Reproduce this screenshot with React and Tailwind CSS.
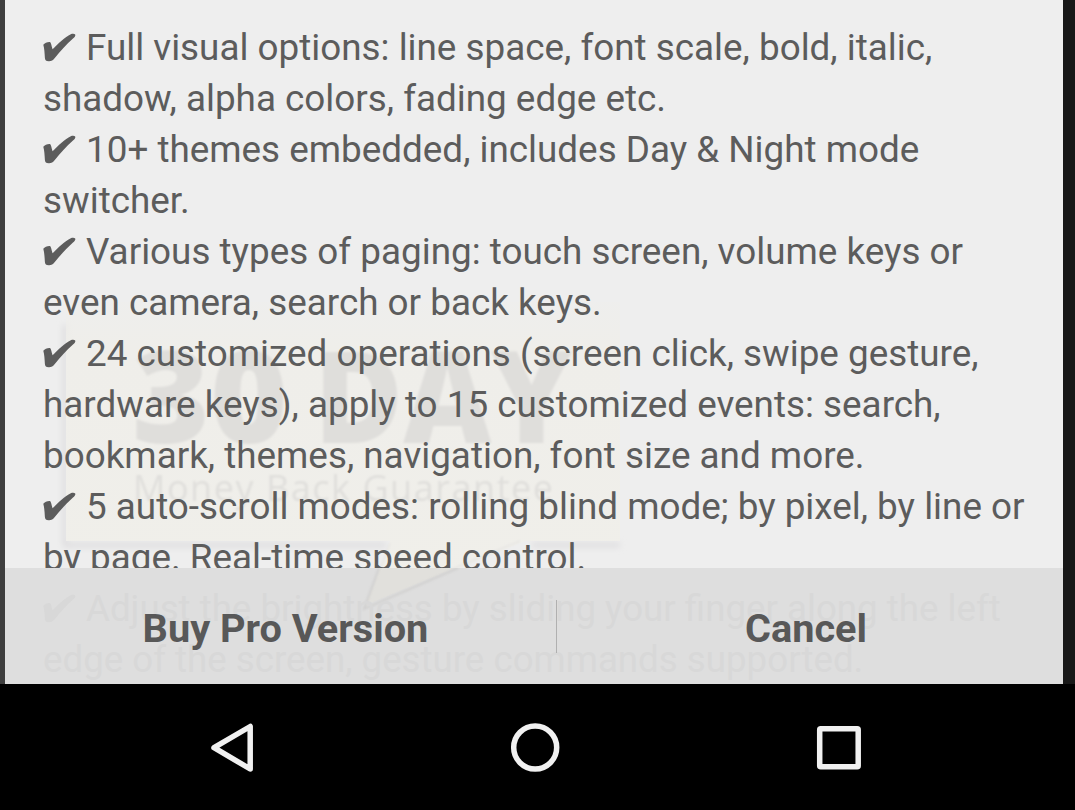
import React from "react";

const LINES = [
  { check: true, text: "Full visual options: line space, font scale, bold, italic," },
  { text: "shadow, alpha colors, fading edge etc." },
  { check: true, text: "10+ themes embedded, includes Day & Night mode" },
  { text: "switcher." },
  { check: true, text: "Various types of paging: touch screen, volume keys or" },
  { text: "even camera, search or back keys." },
  { check: true, text: "24 customized operations (screen click, swipe gesture," },
  { text: "hardware keys), apply to 15 customized events: search," },
  { text: "bookmark, themes, navigation, font size and more." },
  { check: true, text: "5 auto-scroll modes: rolling blind mode; by pixel, by line or" },
  { text: "by page. Real-time speed control." },
];

const HIDDEN_LINES = [
  { check: true, text: "Adjust the brightness by sliding your finger along the left" },
  { text: "edge of the screen, gesture commands supported." },
];

function Check() {
  return (
    <svg className="mr-[10px] h-[29px] w-[33px] shrink-0" viewBox="0 0 33 29" fill="currentColor">
      <path d="M0.3 11.8C1.500 10.300 4.500 8.900 6.800 9.100C8.300 9.700 8.500 13.500 9.600 16.300C15 10.500 22 4 27.800 1.200C29.500 0.500 31.500 0.600 32.200 1.500C32.700 2.800 31.800 3.900 30 5.600C23.500 11.500 17 18.500 11.800 25C10 27.300 8.300 28.300 5.700 28.200C3 28.200 2.200 27.500 1.900 25C1.600 20.500 1.400 15.500 0.300 11.800Z" />
    </svg>
  );
}

function Line({ check, text }) {
  return (
    <div className="flex h-[51px] items-center whitespace-pre">
      {check && <Check />}
      <span>{text}</span>
    </div>
  );
}

function Badge() {
  return (
    <svg className="absolute inset-0 h-[684px] w-[1058px]" viewBox="5 0 1058 684">
      <defs>
        <filter id="soft" x="-10%" y="-10%" width="120%" height="120%">
          <feGaussianBlur stdDeviation="3" />
        </filter>
        <filter id="faint" x="-5%" y="-5%" width="110%" height="110%">
          <feGaussianBlur stdDeviation="0.8" />
        </filter>
        <linearGradient id="paper" x1="0" y1="0" x2="0" y2="1">
          <stop offset="0" stopColor="#efeeea" stopOpacity="0.3" />
          <stop offset="0.15" stopColor="#efeeea" />
          <stop offset="1" stopColor="#f0efea" />
        </linearGradient>
      </defs>
      <path d="M65 325V545H386M532 545H620" fill="none" stroke="#dad9db" strokeWidth="4" filter="url(#soft)" />
      <path d="M66 302H620V541H525L366 607L390 541H66Z" fill="url(#paper)" />
      <path d="M390 543L366 607L455 568L520 541" fill="none" stroke="#e6e5e3" strokeWidth="1.5" filter="url(#faint)" />
      <g filter="url(#faint)">
        <g fill="#dfdedb" fontFamily="Open Sans" fontWeight="800" fontSize="127">
          <text x="132" y="443" textLength="156" lengthAdjust="spacingAndGlyphs">30</text>
          <text x="314" y="443" textLength="258" lengthAdjust="spacingAndGlyphs">DAY</text>
        </g>
        <text x="133" y="501" textLength="420" fill="#e0dfdc" fontFamily="Open Sans" fontSize="36">Money Back Guarantee</text>
      </g>
    </svg>
  );
}

function BadgeTail() {
  return (
    <svg className="absolute left-0 top-0 h-[116px] w-[1058px]" viewBox="5 568 1058 116">
      <path d="M380 568L366 605L455 568Z" fill="#e1e0dc" />
      <path d="M379 568L364 609L458 568" fill="none" stroke="#cbcac9" strokeWidth="2" opacity="0.7" filter="url(#faint)" />
    </svg>
  );
}

export default function App() {
  return (
    <div className="flex h-[810px] w-[1075px] flex-col overflow-hidden bg-black font-['Roboto',sans-serif]">
      <div className="flex h-[684px] bg-[#181818]">
        <div className="w-[5px] bg-[#3e3e3e]" />
        <div className="relative h-[684px] w-[1058px] overflow-hidden bg-[#eeeeee]">
          <Badge />
          <div className="relative h-[568px] overflow-hidden pl-[38px] pt-[22px] text-[36.85px] text-[#5c5c5c]">
            {LINES.map((line) => (
              <Line key={line.text} {...line} />
            ))}
          </div>
          <div className="relative h-[116px] bg-[#dedede]">
            <BadgeTail />
            <div className="absolute inset-x-0 top-[15px] pl-[38px] text-[36.7px] text-[#d8d8d8]">
              {HIDDEN_LINES.map((line) => (
                <Line key={line.text} {...line} />
              ))}
            </div>
            <div className="relative flex h-full items-center text-[39.7px] font-bold text-[#585858]">
              <button className="w-[551px] pl-[10px] pt-[5px] text-center">Buy Pro Version</button>
              <div className="h-[53px] w-px bg-[#b0b0b0]" />
              <button className="flex-1 pr-[8px] pt-[5px] text-center">Cancel</button>
            </div>
          </div>
        </div>
      </div>
      <nav className="h-[126px] bg-black">
        <svg className="h-[126px] w-[1075px]" viewBox="0 684 1075 126" fill="none" stroke="#f1f1f1" strokeWidth="5.500" strokeLinejoin="round">
          <path d="M250.200 726.500V769L214 747.700Z" />
          <circle cx="535.200" cy="747.500" r="21.500" />
          <rect x="819.700" y="728.700" width="38.500" height="38" rx="1" />
        </svg>
      </nav>
    </div>
  );
}
